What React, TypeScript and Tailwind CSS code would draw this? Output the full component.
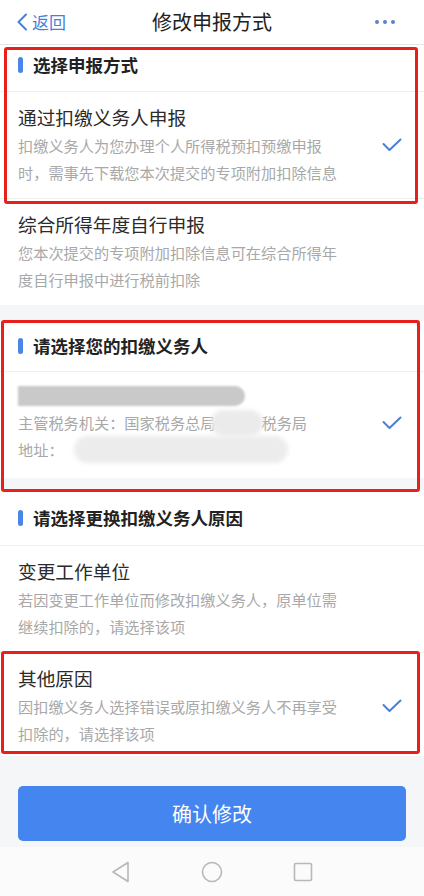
import React from "react";

function Check() {
  return (
    <svg width="20" height="14" viewBox="0 0 20 14" fill="none" className="shrink-0">
      <polyline points="1.5,6 7.5,12 18.5,1.5" stroke="#4a7fd6" strokeWidth="2" strokeLinecap="round" strokeLinejoin="round" />
    </svg>
  );
}

function SectionHeader({ title, h }: { title: string; h: string }) {
  return (
    <div className={`flex items-center gap-[10px] px-[18px] ${h}`}>
      <div className="w-[5px] h-[16px] rounded-full bg-[#4a86e8]" />
      <div className="text-[17.5px] leading-[24px] font-bold text-[#222]">{title}</div>
    </div>
  );
}

function Option({
  title,
  lines,
  checked,
  pb = "pb-[12px]",
}: {
  title: string;
  lines: string[];
  checked?: boolean;
  pb?: string;
}) {
  return (
    <div className={`flex items-center pl-[18px] pr-[22px] pt-[12px] ${pb}`}>
      <div className="flex-1">
        <div className="text-[18.7px] leading-[26px] text-[#2b2b2b]">{title}</div>
        <div className="mt-[2px] text-[15.2px] leading-[27px] text-[#a8a8a8]">
          {lines.map((l) => (
            <div key={l} className="whitespace-nowrap">
              {l}
            </div>
          ))}
        </div>
      </div>
      {checked && <Check />}
    </div>
  );
}

export default function App() {
  return (
    <div className="relative w-[424px] h-[896px] flex flex-col bg-[#f5f6f8] font-['Noto_Sans_CJK_SC',sans-serif] overflow-hidden">
      {/* Nav bar */}
      <div className="h-[45px] shrink-0 bg-white border-b border-[#e6e6e6] grid grid-cols-[1fr_auto_1fr] items-center px-[16px]">
        <div className="flex items-center gap-[4px] text-[17px] text-[#4a7fd6]">
          <svg width="12" height="18" viewBox="0 0 12 18" fill="none">
            <polyline points="10,1.5 2.5,9 10,16.5" stroke="#4a7fd6" strokeWidth="2" strokeLinecap="round" strokeLinejoin="round" />
          </svg>
          <span>返回</span>
        </div>
        <div className="text-center text-[20px] text-[#222]">修改申报方式</div>
        <div className="flex items-center justify-end gap-[4px] pr-[13px]">
          <div className="w-[4px] h-[4px] rounded-full bg-[#5b82c9]" />
          <div className="w-[4px] h-[4px] rounded-full bg-[#5b82c9]" />
          <div className="w-[4px] h-[4px] rounded-full bg-[#5b82c9]" />
        </div>
      </div>

      {/* Section 1 */}
      <div className="bg-white shrink-0">
        <div className="flex items-start gap-[10px] px-[18px] pt-[8px] h-[46px]">
          <div className="mt-[4px] w-[5px] h-[16px] rounded-full bg-[#4a86e8]" />
          <div className="text-[17.5px] leading-[24px] font-bold text-[#222]">选择申报方式</div>
        </div>
        <div className="h-px bg-[#eeeeee]" />
        <Option
          title="通过扣缴义务人申报"
          lines={["扣缴义务人为您办理个人所得税预扣预缴申报", "时，需事先下载您本次提交的专项附加扣除信息"]}
          checked
        />
        <div className="h-px bg-[#eeeeee]" />
        <Option
          title="综合所得年度自行申报"
          lines={["您本次提交的专项附加扣除信息可在综合所得年", "度自行申报中进行税前扣除"]}
        />
      </div>

      <div className="h-[16px] shrink-0" />

      {/* Section 2 */}
      <div className="bg-white shrink-0">
        <SectionHeader title="请选择您的扣缴义务人" h="h-[50px]" />
        <div className="h-px bg-[#eeeeee]" />
        <div className="flex items-center pl-[18px] pr-[22px] pt-[10px] pb-[15px]">
          <div className="flex-1 text-[15.2px] leading-[27px] text-[#a8a8a8]">
            <div className="h-[27px] flex items-center">
              <div className="w-[227px] h-[20px] rounded-r-full rounded-l-[4px] bg-[#c9c9c9] blur-[1px]" />
            </div>
            <div className="whitespace-nowrap flex items-center">
              <span>主管税务机关：国家税务总局</span>
              <span className="relative inline-block w-[46px] h-[20px]">
                <span className="absolute left-[-4px] top-[-3px] w-[52px] h-[26px] rounded-full bg-[#ebebeb] blur-[2px]" />
              </span>
              <span>税务局</span>
            </div>
            <div className="whitespace-nowrap flex items-center">
              <span>地址：</span>
              <span className="relative inline-block w-[220px] h-[20px]">
                <span className="absolute left-[10px] top-[-4px] w-[214px] h-[27px] rounded-full bg-[#ececec] blur-[2px]" />
              </span>
            </div>
          </div>
          <Check />
        </div>
      </div>

      <div className="h-[12px] shrink-0" />

      {/* Section 3 */}
      <div className="bg-white shrink-0">
        <SectionHeader title="请选择更换扣缴义务人原因" h="h-[55px]" />
        <div className="h-px bg-[#eeeeee]" />
        <Option
          title="变更工作单位"
          lines={["若因变更工作单位而修改扣缴义务人，原单位需", "继续扣除的，请选择该项"]}
        />
        <div className="h-px bg-[#eeeeee]" />
        <Option
          title="其他原因"
          lines={["因扣缴义务人选择错误或原扣缴义务人不再享受", "扣除的，请选择该项"]}
          checked
          pb="pb-[9px]"
        />
      </div>

      {/* Footer with button */}
      <div className="flex-1 flex flex-col justify-end px-[18px] pb-[6px]">
        <button className="h-[55px] w-full rounded-[5px] bg-[#4485f0] text-white text-[20px] font-['Noto_Sans_CJK_SC',sans-serif]">
          确认修改
        </button>
      </div>

      {/* System nav bar */}
      <div className="h-[49px] shrink-0 bg-[#fbfbfb] flex items-center justify-center gap-[70px]">
        <svg width="20" height="22" viewBox="0 0 20 22" fill="none">
          <polygon points="17,1.5 2,11 17,20.5" stroke="#b8b8b8" strokeWidth="1.6" strokeLinejoin="round" fill="none" />
        </svg>
        <svg width="22" height="22" viewBox="0 0 22 22" fill="none">
          <circle cx="11" cy="11" r="9.5" stroke="#b8b8b8" strokeWidth="1.6" />
        </svg>
        <svg width="20" height="20" viewBox="0 0 20 20" fill="none">
          <rect x="1.5" y="1.5" width="17" height="17" rx="1.5" stroke="#b8b8b8" strokeWidth="1.6" />
        </svg>
      </div>

      {/* Red annotation boxes */}
      <div className="absolute left-[4px] top-[47px] w-[414px] h-[157px] border-[3px] border-[#e8201c] rounded-[3px] pointer-events-none" />
      <div className="absolute left-[1px] top-[320px] w-[419px] h-[172px] border-[3px] border-[#e8201c] rounded-[3px] pointer-events-none" />
      <div className="absolute left-[1px] top-[651px] w-[419px] h-[103px] border-[3px] border-[#e8201c] rounded-[3px] pointer-events-none" />
    </div>
  );
}
